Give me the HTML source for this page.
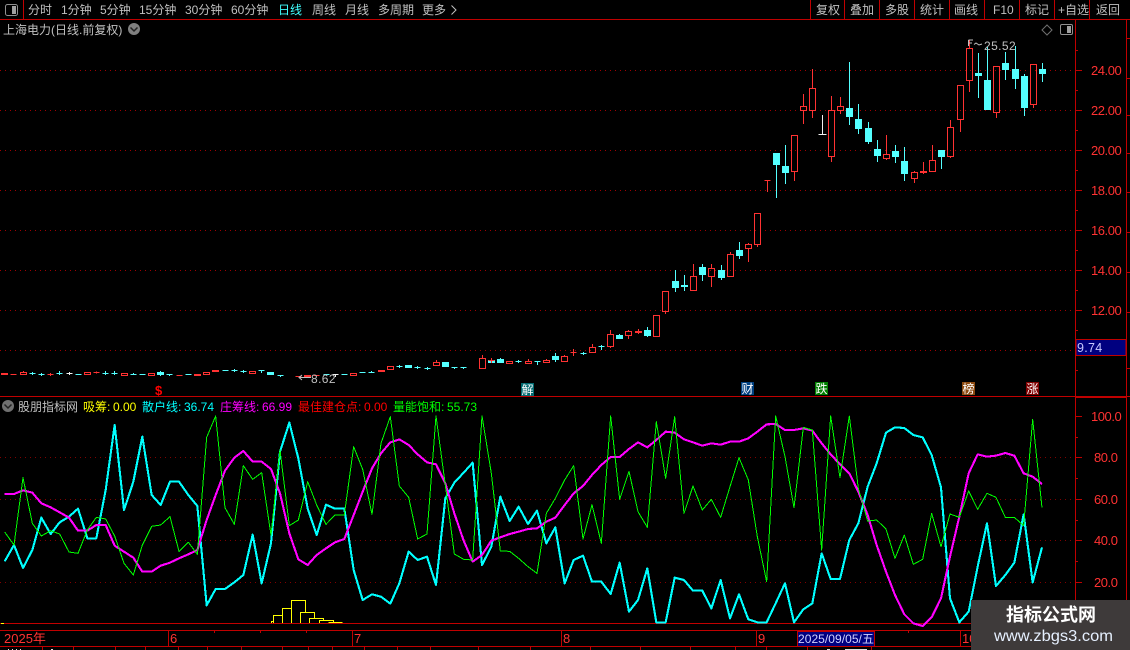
<!DOCTYPE html>
<html lang="zh">
<head>
<meta charset="utf-8">
<title>上海电力</title>
<style>
html,body{margin:0;padding:0;background:#000;width:1130px;height:650px;overflow:hidden}
svg{display:block;position:absolute;left:0;top:0}
text{font-family:"Liberation Sans","WenQuanYi Zen Hei","Noto Sans CJK SC",sans-serif;font-size:12px;fill:#c0c0c0}
.ax{fill:#ff3232;font-size:13px;letter-spacing:-.45px}
.tm{fill:#ff3232;font-size:13px}
.sg{fill:#fff;font-size:12px}
</style>
</head>
<body>
<svg width="1130" height="650" viewBox="0 0 1130 650" xmlns="http://www.w3.org/2000/svg">
<rect width="1130" height="650" fill="#000"/>

<!-- dotted grid -->
<g stroke="#a00000" stroke-width="1" stroke-dasharray="1 4" shape-rendering="crispEdges" fill="none">
<path d="M0 70.5H1075M0 110.5H1075M0 150.5H1075M0 190.5H1075M0 230.5H1075M0 270.5H1075M0 310.5H1075M0 350.5H1075"/>
</g>
<g stroke="#800000" stroke-width="1" stroke-dasharray="1 4" shape-rendering="crispEdges" fill="none">
<path d="M0 457.5H1075M0 499.5H1075M0 540.5H1075M0 582.5H1075"/>
</g>

<!-- frame -->
<g stroke="#c00000" stroke-width="1" shape-rendering="crispEdges" fill="none">
<path d="M0 19.5H1130M23.5 0V19M810.5 0V19M844.5 0V19M879.5 0V19M914.5 0V19M949.5 0V19M984.5 0V19M1019.5 0V19M1054.5 0V19M1089.5 0V19"/>
<path d="M1075.5 20V630M1126.5 20V630"/>
<path d="M0 396.5H1130M1075 397.5H1127"/>
<path d="M0 623.5H1075M0 630.5H1130M0 646.5H1130"/>
<path d="M168.5 631V646M352.5 631V646M561.5 631V646M756.5 631V646M960.5 631V646"/>
<path d="M214.5 631V633M260.5 631V633M306.5 631V633M908.5 631V633"/>
<path d="M42.5 647V650M73.5 647V650M115.5 647V650M145.5 647V650M178.5 647V650M207.5 647V650M241.5 647V650M282.5 647V650M308.5 647V650M332.5 647V650M364.5 647V650M397.5 647V650M430.5 647V650M478.5 647V650M530.5 647V650M590.5 647V650M640.5 647V650M690.5 647V650M735.5 647V650M766.5 647V650M807.5 647V650M871.5 647V650"/>
<path d="M1075 70.5H1082M1075 110.5H1082M1075 150.5H1082M1075 190.5H1082M1075 230.5H1082M1075 270.5H1082M1075 310.5H1082M1075 90.5H1078M1075 130.5H1078M1075 170.5H1078M1075 210.5H1078M1075 250.5H1078M1075 290.5H1078M1075 330.5H1078M1075 370.5H1078M1075 50.5H1078"/>
<path d="M1075 416.5H1082M1075 457.5H1082M1075 499.5H1082M1075 540.5H1082M1075 582.5H1082M1075 437.5H1078M1075 478.5H1078M1075 520.5H1078M1075 561.5H1078M1075 603.5H1078"/>
<path d="M1127 38.5H1130M1127 78.5H1130M1127 115.5H1130M1127 153.5H1130M1127 192.5H1130M1127 232.5H1130M1127 272.5H1130M1127 312.5H1130M1127 368.5H1130"/>
</g>

<!-- toolbar -->
<rect x="5.5" y="4.5" width="12" height="11" rx="2" fill="#000" stroke="#909090"/>
<rect x="12" y="6" width="4" height="8" fill="#a0a0a0"/>
<text x="28" y="14">分时</text>
<text x="61" y="14">1分钟</text>
<text x="100" y="14">5分钟</text>
<text x="139" y="14">15分钟</text>
<text x="185" y="14">30分钟</text>
<text x="231" y="14">60分钟</text>
<text x="278" y="14" style="fill:#40ffff">日线</text>
<text x="312" y="14">周线</text>
<text x="345" y="14">月线</text>
<text x="378" y="14">多周期</text>
<text x="422" y="14">更多</text>
<path d="M451.5 5.5L456 10L451.5 14.5" fill="none" stroke="#c0c0c0"/>
<text x="816" y="14">复权</text>
<text x="850" y="14">叠加</text>
<text x="885" y="14">多股</text>
<text x="920" y="14">统计</text>
<text x="954" y="14">画线</text>
<text x="993" y="14">F10</text>
<text x="1025" y="14">标记</text>
<text x="1058" y="14">+自选</text>
<text x="1096" y="14">返回</text>

<!-- title line -->
<text x="3" y="34">上海电力(日线.前复权)</text>
<circle cx="134" cy="29" r="6" fill="#808080"/>
<path d="M130.5 27.5L134 31L137.5 27.5" fill="none" stroke="#222" stroke-width="1.5"/>
<path d="M1047 25L1052 30L1047 35L1042 30Z" fill="none" stroke="#707070"/>
<rect x="1060.5" y="24.5" width="12" height="10" rx="1.5" fill="#000" stroke="#909090"/>
<rect x="1067" y="26" width="4" height="7" fill="#a0a0a0"/>

<!-- candles cyan -->
<path fill="#54ffff" stroke="#54ffff" stroke-width="1" shape-rendering="crispEdges" d="
M29.5 373.5h6M32.5 372v3
M38.5 374.5h6M41.5 373v3
M56.5 373.5h6M59.5 371v4
M75.5 374.5h6
M102.5 373.5h6M105.5 371v4
M111.5 373.5h6M114.5 371v4
M130.5 374.5h6M133.5 373v2
M139.5 374.5h6
M157.5 372.5h6v2h-6zM160.5 371v5
M166.5 374.5h6M169.5 374v2
M185.5 374.5h6
M222.5 370.5h6
M231.5 370.5h6M234.5 369v3
M240.5 371.5h6M243.5 370v3
M258.5 370.5h6M261.5 370v3
M267.5 372.5h6v2h-6z
M277.5 375.5h6M280.5 375v2
M323.5 374.5h6
M341.5 374.5h6
M359.5 372.5h6
M368.5 372.5h6M371.5 371v2
M396.5 366.5h6M399.5 365v3
M405.5 365.5h6v2h-6zM408.5 365v3
M414.5 367.5h6M417.5 366v3
M424.5 368.5h6M427.5 367v3
M442.5 362.5h6v4h-6zM445.5 362v5
M451.5 367.5h6M454.5 367v2
M460.5 367.5h6M463.5 367v2
M488.5 360.5h6v2h-6z
M497.5 359.5h6v3h-6zM500.5 358v5
M515.5 361.5h6M518.5 360v3
M534.5 361.5h6M537.5 361v4
M552.5 356.5h6v3h-6zM555.5 353v9
M580.5 353.5h6M583.5 352v3
M598.5 346.5h6M601.5 345v5
M616.5 335.5h6v3h-6zM619.5 334v5
M644.5 330.5h6v5h-6zM647.5 327v10
M672.5 281.5h6v6h-6zM675.5 270v22
M681.5 285.5h6v1h-6zM684.5 275v16
M699.5 267.5h6v7h-6zM702.5 264v17
M718.5 270.5h6v7h-6zM721.5 265v15
M736.5 250.5h6v5h-6zM739.5 242v17
M773.5 153.5h6v11h-6zM776.5 165v33
M782.5 166.5h6v6h-6zM785.5 145v39
M846.5 108.5h6v8h-6zM849.5 62v63
M855.5 119.5h6v9h-6zM858.5 104v30
M865.5 128.5h6v13h-6zM868.5 122v22
M874.5 149.5h6v6h-6zM877.5 140v22
M892.5 151.5h6v5h-6zM895.5 145v18
M901.5 161.5h6v12h-6zM904.5 147v34
M938.5 150.5h6v6h-6zM941.5 157v12
M975.5 73.5h6v2h-6zM978.5 53v45
M984.5 80.5h6v29h-6zM987.5 47v63
M1002.5 63.5h6v6h-6zM1005.5 52v28
M1012.5 69.5h6v9h-6zM1015.5 46v43
M1021.5 76.5h6v31h-6zM1024.5 74v42
M1039.5 69.5h6v4h-6zM1042.5 63v19"/>

<!-- candles white -->
<path fill="none" stroke="#f0f0f0" stroke-width="1" shape-rendering="crispEdges" d="M66.5 373.5h6M69.5 372v3M332.5 374.5h6M335.5 374v3M822.5 115V134M818.5 134.5h8"/>

<!-- candles red -->
<path fill="none" stroke="#ff3232" stroke-width="1" shape-rendering="crispEdges" d="
M1.5 373.5h6v1h-6z
M10.5 374.5h6
M20.5 372.5h6v2h-6zM23.5 371v1.5
M47.5 374.5h6M50.5 373v3
M84.5 372.5h6v2h-6z
M93.5 372.5h6M96.5 371.5v2
M121.5 373.5h6v2h-6z
M148.5 373.5h6v2h-6z
M176.5 375.5h6
M194.5 374.5h6v1h-6z
M203.5 372.5h6v2h-6z
M212.5 370.5h6v1h-6z
M249.5 371.5h6v2h-6z
M295.5 376.5h6
M304.5 375.5h6v1h-6z
M313.5 375.5h6
M350.5 373.5h6v2h-6z
M378.5 370.5h6v1h-6z
M387.5 366.5h6v3h-6z
M433.5 362.5h6v3h-6zM436.5 360v2
M479.5 358.5h6v10h-6zM482.5 355v3
M488.5 360.5h6M491.5 358v5
M506.5 361.5h6v2h-6z
M525.5 361.5h6v2h-6zM528.5 359v2
M543.5 360.5h6v2h-6zM546.5 359v2
M561.5 356.5h6v5h-6zM564.5 355v2
M570.5 352.5h6M573.5 349v7
M589.5 347.5h6v5h-6zM592.5 344v3
M607.5 334.5h6v12h-6zM610.5 330v4M610.5 347v1
M625.5 331.5h6v4h-6zM628.5 330v1M628.5 336v3
M635.5 331.5h6v1h-6zM638.5 329v5
M653.5 315.5h6v21h-6z
M662.5 291.5h6v20h-6zM665.5 312v2
M690.5 276.5h6v14h-6zM693.5 264v12
M708.5 268.5h6v8h-6zM711.5 264v4M711.5 277v10
M727.5 254.5h6v22h-6zM730.5 252v2
M745.5 244.5h6v4h-6zM748.5 243v1M748.5 249v13
M754.5 213.5h6v31h-6zM757.5 245v2
M764.5 180.5h6M767.5 180v12
M791.5 135.5h6v36h-6zM794.5 172v9
M800.5 106.5h6v4h-6zM803.5 94v12M803.5 111v13
M809.5 88.5h6v22h-6zM812.5 69v19M812.5 111v7
M828.5 110.5h6v46h-6zM831.5 96v14M831.5 157v5
M837.5 106.5h6v4h-6zM840.5 97v9M840.5 111v3
M883.5 154.5h6v4h-6zM886.5 135v19M886.5 159v1
M911.5 172.5h6v6h-6zM914.5 171v1M914.5 179v4
M920.5 171.5h6v1h-6zM923.5 162v12
M929.5 160.5h6v11h-6zM932.5 145v15
M947.5 127.5h6v29h-6zM950.5 120v7M950.5 157v1
M957.5 85.5h6v34h-6zM960.5 120v12
M966.5 48.5h6v32h-6zM969.5 40v8M969.5 81v11
M993.5 66.5h6v46h-6zM996.5 113v5
M1030.5 64.5h6v40h-6zM1033.5 105v3"/>

<!-- price labels -->
<path d="M311 377.5H299M302 375L299 377.5L302 380" stroke="#c0c0c0" fill="none"/>
<text x="311" y="383" style="fill:#c0c0c0;letter-spacing:.4px">8.62</text>
<path d="M968.5 40V46M968.5 40H973M968.5 43H972" stroke="#c0c0c0" fill="none" shape-rendering="crispEdges"/>
<path d="M974 44.5L976 43L979 45L982 44" stroke="#c0c0c0" fill="none"/>
<text x="984" y="50" style="fill:#c0c0c0;letter-spacing:.4px">25.52</text>

<!-- signals -->
<text x="155" y="395" style="fill:#ff0000;font-weight:bold;font-size:13px">$</text>
<rect x="521" y="383" width="13" height="13" fill="#006a70"/><text x="521.5" y="394" class="sg">解</text>
<rect x="741" y="382" width="13" height="13" fill="#004080"/><text x="741.5" y="393" class="sg">财</text>
<rect x="815" y="382" width="13" height="13" fill="#008000"/><text x="815.5" y="393" class="sg">跌</text>
<rect x="962" y="382" width="13" height="13" fill="#8c4a10"/><text x="962.5" y="393" class="sg">榜</text>
<rect x="1026" y="382" width="13" height="13" fill="#800000"/><text x="1026.5" y="393" class="sg">涨</text>

<!-- current price box -->
<rect x="1076" y="339.5" width="50" height="16" fill="#000080" stroke="#c00000" shape-rendering="crispEdges"/>
<text x="1077" y="352" style="fill:#c8c8ff;font-size:12.5px;letter-spacing:.3px">9.74</text>

<!-- axis labels -->
<text x="1091" y="75" class="ax">24.00</text>
<text x="1091" y="115" class="ax">22.00</text>
<text x="1091" y="155" class="ax">20.00</text>
<text x="1091" y="195" class="ax">18.00</text>
<text x="1091" y="235" class="ax">16.00</text>
<text x="1091" y="275" class="ax">14.00</text>
<text x="1091" y="315" class="ax">12.00</text>
<text x="1091" y="421" class="ax">100.0</text>
<text x="1094" y="462" class="ax">80.0</text>
<text x="1094" y="504" class="ax">60.0</text>
<text x="1094" y="545" class="ax">40.0</text>
<text x="1094" y="587" class="ax">20.0</text>

<!-- legend -->
<circle cx="8" cy="406" r="6" fill="#707070"/>
<path d="M4.5 404.5L8 408L11.5 404.5" fill="none" stroke="#222" stroke-width="1.5"/>
<text x="18" y="411">股朋指标网</text>
<text x="83" y="411" style="fill:#ffff00">吸筹:</text>
<text x="113" y="411" style="fill:#ffff00">0.00</text>
<text x="142" y="411" style="fill:#00ffff">散户线:</text>
<text x="184" y="411" style="fill:#00ffff">36.74</text>
<text x="220" y="411" style="fill:#ff00ff">庄筹线:</text>
<text x="262" y="411" style="fill:#ff00ff">66.99</text>
<text x="298" y="411" style="fill:#ff0000">最佳建仓点:</text>
<text x="364" y="411" style="fill:#ff0000">0.00</text>
<text x="393" y="411" style="fill:#00ff00">量能饱和:</text>
<text x="447" y="411" style="fill:#00ff00">55.73</text>

<!-- yellow -->
<path fill="none" stroke="#ffff00" stroke-width="1" shape-rendering="crispEdges" d="M1 623.5H4M271.5 623V621.5H273.5M273.5 623V615.5H282.5M282.5 623V608.5H291.5M291.5 623V600.5H305.5V612.5M300.5 623V612.5H314.5V618.5M309.5 623V618.5H323.5V620.5M319.5 623V620.5H333.5V622.5M328.5 622.5H342.5"/>

<g transform="translate(0 410) scale(.33333)" fill="none" stroke-linejoin="round" shape-rendering="crispEdges">
<polyline stroke="#00ffff" stroke-width="6.3" points="14,454 42,405 69,474 97,420 124,323 152,372 179,337 207,320 234,296 262,385 289,385 317,240 344,45 372,300 400,215 427,80 455,255 482,285 510,215 537,215 565,255 592,288 620,586 647,537 675,537 703,517 730,495 758,374 785,520 813,400 840,125 868,38 895,145 923,295 950,375 978,284 1005,296 1033,296 1061,480 1088,570 1116,553 1143,560 1171,581 1198,520 1226,425 1253,450 1281,440 1308,525 1336,265 1363,218 1391,188 1418,158 1446,465 1474,410 1501,260 1529,333 1556,290 1584,342 1611,302 1639,400 1666,352 1694,520 1721,450 1749,437 1776,515 1804,515 1832,552 1859,458 1887,605 1914,570 1942,475 1969,637 1997,637 2024,503 2052,510 2079,542 2107,542 2134,595 2162,510 2190,625 2217,553 2245,628 2272,637 2300,637 2327,580 2355,520 2382,637 2410,598 2437,580 2465,430 2492,507 2520,507 2548,390 2575,340 2603,230 2630,160 2658,68 2685,52 2713,54 2740,75 2768,82 2795,135 2823,232 2850,565 2878,637 2906,605 2933,470 2961,340 2988,528 3016,495 3043,458 3071,313 3098,517 3126,412"/>
<polyline stroke="#ff00ff" stroke-width="6.3" points="14,252 42,252 69,241 97,248 124,280 152,292 179,307 207,323 234,362 262,362 289,345 317,345 344,407 372,425 400,443 427,485 455,485 482,467 510,458 537,445 565,433 592,420 620,330 647,255 675,182 703,143 730,123 758,155 785,155 813,177 840,250 868,370 895,448 923,465 950,435 978,415 1005,397 1033,387 1061,315 1088,245 1116,175 1143,130 1171,97 1198,88 1226,105 1253,133 1281,157 1308,163 1336,220 1363,310 1391,392 1418,455 1446,435 1474,392 1501,382 1529,372 1556,365 1584,357 1611,355 1639,335 1666,323 1694,285 1721,250 1749,228 1776,195 1804,165 1832,141 1859,141 1887,117 1914,97 1942,112 1969,90 1997,65 2024,68 2052,88 2079,97 2107,107 2134,100 2162,104 2190,95 2217,95 2245,85 2272,65 2300,43 2327,42 2355,60 2382,60 2410,55 2437,62 2465,100 2492,133 2520,163 2548,190 2575,245 2603,315 2630,405 2658,485 2685,555 2713,613 2740,640 2768,648 2795,622 2823,565 2850,440 2878,320 2906,190 2933,133 2961,140 2988,137 3016,129 3043,137 3071,190 3098,200 3126,222"/>
<polyline stroke="#00ff00" stroke-width="3" points="14,366 42,405 69,203 97,340 124,378 152,362 179,372 207,426 234,430 262,360 289,322 317,327 344,378 372,460 400,495 427,405 455,349 482,345 510,320 537,424 565,397 592,433 620,82 647,18 675,293 703,343 730,167 758,208 785,188 813,375 840,120 868,347 895,330 923,215 950,285 978,343 1005,315 1033,315 1061,110 1088,178 1116,313 1143,100 1171,20 1198,228 1226,262 1253,387 1281,372 1308,18 1336,225 1363,432 1391,448 1418,450 1446,18 1474,190 1501,423 1529,424 1556,445 1584,470 1611,490 1639,310 1666,265 1694,210 1721,167 1749,387 1776,284 1804,400 1832,18 1859,268 1887,184 1914,305 1942,352 1969,35 1997,205 2024,20 2052,310 2079,228 2107,300 2134,268 2162,322 2190,230 2217,143 2245,210 2272,380 2300,515 2327,18 2355,140 2382,293 2410,52 2437,60 2465,420 2492,18 2520,203 2548,18 2575,235 2603,333 2630,330 2658,357 2685,445 2713,375 2740,463 2768,448 2795,310 2823,410 2850,312 2878,322 2906,243 2933,298 2961,250 2988,262 3016,322 3043,322 3071,347 3098,28 3126,293"/>
</g>

<!-- time axis -->
<text x="4" y="643" class="tm">2025年</text>
<text x="170" y="643" class="tm">6</text>
<text x="354" y="643" class="tm">7</text>
<text x="563" y="643" class="tm">8</text>
<text x="758" y="643" class="tm">9</text>
<text x="962" y="643" class="tm">10</text>
<rect x="797.5" y="631.5" width="77" height="15" fill="#000080" stroke="#c00000" shape-rendering="crispEdges"/>
<text x="798" y="643" style="fill:#d0d0ff;font-size:12px;letter-spacing:.05px">2025/09/05/五</text>

<!-- clipped bottom row -->
<path d="M8 649.5h1M12 649.5h1M16 649.5h1M20 649.5h1M51 649.5h2M827 649.5h3M845 649.5h22" stroke="#e0e0e0" fill="none" shape-rendering="crispEdges"/>

<!-- watermark -->
<rect x="971" y="600" width="159" height="50" fill="#3e3a3a"/>
<text x="1006" y="621" style="fill:#fff;font-family:'Noto Sans CJK SC','WenQuanYi Zen Hei',sans-serif;font-weight:bold;font-size:18px">指标公式网</text>
<text x="994" y="641" textLength="119" lengthAdjust="spacingAndGlyphs" style="fill:#e6f0ff;font-size:16px">www.zbgs3.com</text>
</svg>
</body>
</html>
